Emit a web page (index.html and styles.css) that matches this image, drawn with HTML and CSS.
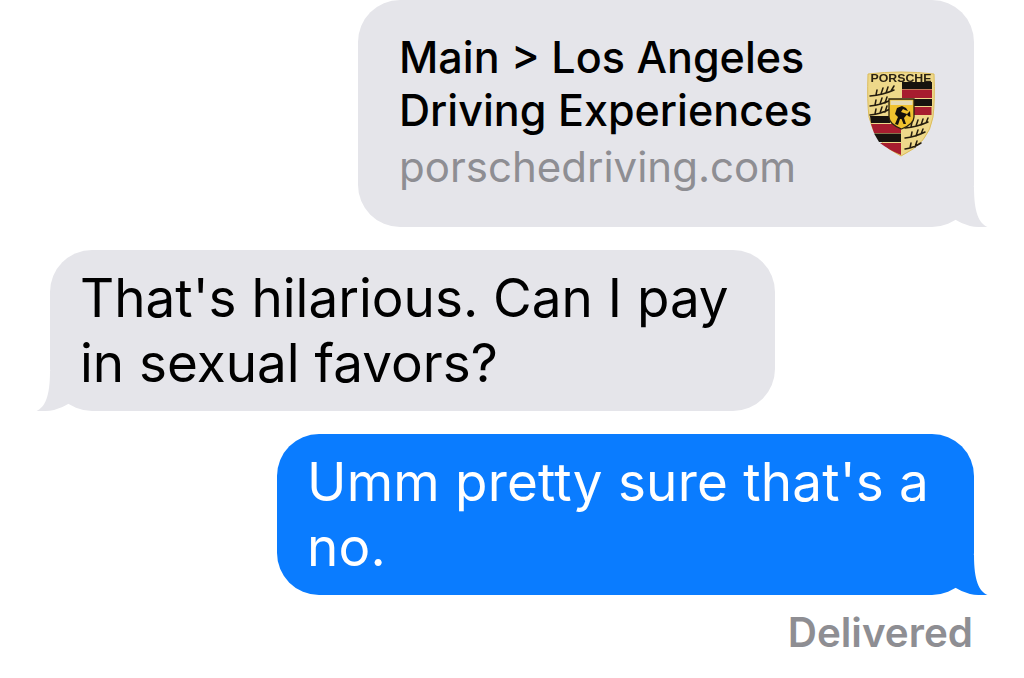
FILE: index.html
```html
<!DOCTYPE html>
<html lang="en">
<head>
<meta charset="utf-8">
<title>Messages</title>
<link rel="stylesheet" href="styles.css">
</head>
<body>
<main class="thread">
  <div class="bubble link-card">
    <div class="link-text">
      <div class="link-title">Main &gt; Los Angeles<br>Driving Experiences</div>
      <div class="link-domain">porschedriving.com</div>
    </div>
    <svg class="crest" viewBox="0 0 68 86" width="68" height="86" aria-hidden="true">
      <path d="M1 3Q34 -1 67 3Q68 30 66 46Q62 72 34 85Q7 72 2 46Q0 30 1 3Z" fill="#eed88a" stroke="#dcbc5a" stroke-width="1"/>
      <text x="34" y="10.500" class="crest-word" text-anchor="middle" textLength="61" lengthAdjust="spacingAndGlyphs">PORSCHE</text>
      <path d="M35 11H65V18H35Z" fill="#17130e"/>
      <path d="M35 18.500H65V27H35Z" fill="#a71d2f"/>
      <path d="M47 28H65V35H47Z" fill="#17130e"/>
      <path d="M47 36H64.500V44H47Z" fill="#a71d2f"/>
      <path d="M3 45H23V52H4Z" fill="#17130e"/>
      <path d="M4 53H34V62H7Z" fill="#a71d2f"/>
      <path d="M7 62.500H34V71H12Z" fill="#17130e"/>
      <path d="M13 72H34V84Q22 79 13 72Z" fill="#a71d2f"/>
      <g class="antlers">
        <path d="M3 25Q16 24 27 19M9 24L10 19M14 23L16 17M19 22L21 16M24 20L27 15"/>
        <path d="M3 35Q14 34 24 29M8 34L9 29M13 33L15 27M18 32L20 26"/>
        <path d="M3 44Q14 43 23 38M8 43L9 38M13 42L15 36M18 41L20 35"/>
        <path d="M38 57Q50 56 61 51M44 56L45 51M49 55L51 49M54 54L56 48M59 52L61 47"/>
        <path d="M38 67Q48 66 58 61M44 66L45 61M49 65L51 59M54 63L56 58"/>
        <path d="M38 78Q46 77 54 72M43 77L44 72M48 76L50 70"/>
      </g>
      <path d="M22 28H47V46Q47 53 34.500 58Q22 53 22 46Z" fill="#f0c22e" stroke="#2b2210" stroke-width="1.300"/>
      <path d="M23.500 29.500H45.500V34H23.500Z" fill="#e6dcb4"/>
      <path d="M28 53L31 46L28 43L30 37L35 35L39 37L41 40L38 39L36 38L34 41L40 43L43 40L43.500 46L41 45L40 43.500L37 47L39 53L36.500 53L34.500 48L33 48L31 54Z" fill="#14100b"/>
    </svg>
    <svg class="tail tail-right" viewBox="0 0 40 40" width="40" height="40" aria-hidden="true"><path d="M7 32.500Q14 37 22 39Q30 40.500 39.500 40C31 36 26 26 26 0L7 0Z"/></svg>
  </div>

  <div class="bubble received">
    <p class="message">That's hilarious. Can I pay<br>in sexual favors?</p>
    <svg class="tail tail-left" viewBox="0 0 40 40" width="40" height="40" aria-hidden="true"><path d="M33 32.500Q26 37 18 39Q10 40.500 0.500 40C9 36 14 26 14 0L33 0Z"/></svg>
  </div>

  <div class="bubble sent">
    <p class="message message-wide">Umm pretty sure that's a<br>no.</p>
    <svg class="tail tail-right" viewBox="0 0 40 40" width="40" height="40" aria-hidden="true"><path d="M7 32.500Q14 37 22 39Q30 40.500 39.500 40C31 36 26 26 26 0L7 0Z"/></svg>
  </div>

  <div class="status">Delivered</div>
</main>
</body>
</html>
```

FILE: styles.css
```css
html, body {
  margin: 0;
  height: 100%;
  background: #ffffff;
  overflow: hidden;
}

.thread {
  display: flex;
  flex-direction: column;
  width: 1024px;
  height: 678px;
  font-family: Inter, "Liberation Sans", sans-serif;
}

.bubble {
  position: relative;
  box-sizing: border-box;
  height: 161px;
  padding: 16px 30px 0;
  border-radius: 42px;
}

.message {
  margin: 0;
  font-size: 53px;
  line-height: 65px;
  white-space: nowrap;
}

.message-wide {
  letter-spacing: 0.2px;
}

.link-card {
  display: flex;
  justify-content: space-between;
  align-items: center;
  align-self: flex-end;
  width: 616px;
  height: 227px;
  margin-right: 50px;
  padding: 0 39px 0 41px;
  background: #e5e5ea;
}

.link-text {
  margin-top: -4px;
  color: #000000;
  white-space: nowrap;
}

.link-title {
  font-size: 43.1px;
  font-weight: 550;
  line-height: 53px;
}

.link-domain {
  margin-top: 3px;
  font-size: 42px;
  font-weight: 400;
  line-height: 53px;
  color: #8e8e93;
}

.crest {
  flex: none;
  margin-top: 1px;
  filter: blur(0.4px);
}

.crest-word {
  font-family: "Liberation Sans", sans-serif;
  font-size: 10px;
  font-weight: 700;
  fill: #2a2112;
}

.antlers {
  fill: none;
  stroke: #241c0e;
  stroke-width: 1.5;
  stroke-linecap: round;
}

.received {
  align-self: flex-start;
  width: 725px;
  margin: 23px 0 0 50px;
  background: #e5e5ea;
  color: #000000;
}

.sent {
  align-self: flex-end;
  width: 697px;
  margin: 23px 50px 0 0;
  background: #0a7cff;
  color: #ffffff;
}

.tail {
  position: absolute;
  bottom: 0;
}

.tail-right {
  right: -14px;
}

.tail-left {
  left: -14px;
}

.link-card .tail, .received .tail {
  fill: #e5e5ea;
}

.sent .tail {
  fill: #0a7cff;
}

.status {
  align-self: flex-end;
  margin: 13px 51px 0 0;
  font-size: 40.4px;
  font-weight: 600;
  line-height: 50px;
  color: #8e8e93;
}
```
